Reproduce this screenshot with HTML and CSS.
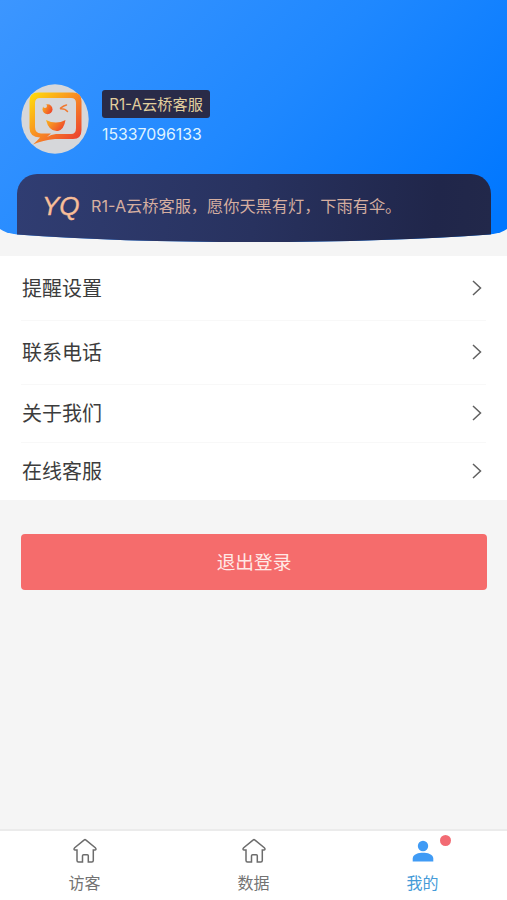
FILE: index.html
```html
<!DOCTYPE html>
<html lang="zh-CN">
<head>
<meta charset="utf-8">
<meta name="viewport" content="width=device-width, initial-scale=1">
<title>我的</title>
<link rel="stylesheet" href="styles.css">
</head>
<body>
<div class="page">
  <header class="hero">
    <div class="profile">
      <svg class="avatar" viewBox="0 0 68 70" aria-hidden="true">
        <defs>
          <linearGradient id="flame" gradientUnits="userSpaceOnUse" x1="12" y1="10" x2="58" y2="56">
            <stop offset="0" stop-color="#ffd80c"/>
            <stop offset=".5" stop-color="#f88a24"/>
            <stop offset="1" stop-color="#ea3e31"/>
          </linearGradient>
          <linearGradient id="smile" x1="0" y1="0" x2="1" y2="0.5">
            <stop offset="0" stop-color="#fcb51c"/>
            <stop offset="1" stop-color="#ef4b2b"/>
          </linearGradient>
        </defs>
        <ellipse cx="34" cy="35" rx="33.7" ry="34.7" fill="#d6d7da"/>
        <path fill="url(#flame)" fill-rule="evenodd" d="M17 8.500H52Q60.500 8.500 60.500 17V46Q60.500 55 52 55H34Q22 56 12 60.500Q16 57 19 53.500Q8.500 53 8.500 44V17Q8.500 8.500 17 8.500ZM19 14Q14 14 14 19V43Q14 49 20 49.500H30L26 53Q30 50.500 35 50H50Q55 50 55 44V19Q55 14 50 14Z"/>
        <circle cx="26.500" cy="25.200" r="5" fill="url(#smile)"/>
        <circle cx="24" cy="22" r="2" fill="#d6d7da"/>
        <path fill="url(#smile)" d="M25 36Q35 41 44.500 36Q43 45.500 37 47Q28 48 25 36Z"/>
        <path fill="none" stroke="#f07a32" stroke-width="1.500" stroke-linecap="round" d="M45.500 21Q43 21.500 39.500 24.200M39.500 24.800Q44 24.500 46.500 27.500"/>
      </svg>
      <div class="identity">
        <div class="name">R1-A云桥客服</div>
        <div class="phone">15337096133</div>
      </div>
    </div>
    <div class="banner">
      <span class="brand">YQ</span>
      <span class="greeting">R1-A云桥客服，愿你天黑有灯，下雨有伞。</span>
    </div>
  </header>

  <nav class="menu">
    <a class="row row-first"><span>提醒设置</span><svg class="chevron" viewBox="0 0 10 16"><path d="M1 1l7.500 7L1 15"/></svg></a>
    <a class="row row-second"><span>联系电话</span><svg class="chevron" viewBox="0 0 10 16"><path d="M1 1l7.500 7L1 15"/></svg></a>
    <a class="row row-third"><span>关于我们</span><svg class="chevron" viewBox="0 0 10 16"><path d="M1 1l7.500 7L1 15"/></svg></a>
    <a class="row row-last"><span>在线客服</span><svg class="chevron" viewBox="0 0 10 16"><path d="M1 1l7.500 7L1 15"/></svg></a>
  </nav>

  <button class="logout">退出登录</button>

  <footer class="tabs">
    <a class="tab">
      <svg class="tab-icon" viewBox="0 0 26 26"><path class="house" d="M12.300 1.900Q13 1.300 13.700 1.900L23.300 9.700Q24.900 11.600 23 12H21.300V22.500Q21.300 24 19.800 24H16.300V17.800Q16.300 16.800 15.300 16.800H11.700Q10.500 16.800 10.500 17.800V24H6.500Q5 24 5 22.500V12H3Q1.100 11.600 2.700 9.700Z"/></svg>
      <span>访客</span>
    </a>
    <a class="tab">
      <svg class="tab-icon" viewBox="0 0 26 26"><path class="house" d="M12.300 1.900Q13 1.300 13.700 1.900L23.300 9.700Q24.900 11.600 23 12H21.300V22.500Q21.300 24 19.800 24H16.300V17.800Q16.300 16.800 15.300 16.800H11.700Q10.500 16.800 10.500 17.800V24H6.500Q5 24 5 22.500V12H3Q1.100 11.600 2.700 9.700Z"/></svg>
      <span>数据</span>
    </a>
    <a class="tab tab-active">
      <span class="icon-wrap">
        <svg class="tab-icon" viewBox="0 0 26 26"><circle cx="13" cy="8" r="5.200"/><path d="M2.700 23.500V20.500C2.700 16 9 14.800 13 14.800S23.300 16 23.300 20.500V23.500Z"/></svg>
        <i class="dot"></i>
      </span>
      <span>我的</span>
    </a>
  </footer>
</div>
</body>
</html>
```

FILE: styles.css
```css
* { box-sizing: border-box; }

body {
  margin: 0;
  background: #f5f5f5;
  color: #3c3c3c;
  font-family: Inter, "Noto Sans CJK SC", sans-serif;
}

.page {
  display: flex;
  flex-direction: column;
  height: 900px;
}

.hero {
  flex: none;
  height: 242px;
  margin-bottom: 14px;
  padding: 84px 16px 0 17px;
  background: linear-gradient(135deg, #3c96ff 0%, #1f88ff 50%, #0077ff 95%);
  clip-path: path("M0 0H507V229Q502 233 490 234.500Q390 242 253.500 242Q117 242 17 234.500Q5 233 0 229Z");
}

.profile {
  display: flex;
  height: 90px;
  padding-left: 4px;
}

.avatar {
  width: 68px;
  height: 70px;
}

.identity { padding: 6px 0 0 13px; }

.name {
  width: 108px;
  height: 28px;
  border-radius: 3px;
  background: #292b48;
  color: #e1cf9d;
  font-size: 15.200px;
  line-height: 30px;
  text-align: center;
  white-space: nowrap;
}

.phone {
  margin-top: 7px;
  color: #dff3ff;
  font-size: 15.800px;
  line-height: 20px;
}

.banner {
  display: flex;
  align-items: center;
  height: 68px;
  padding: 0 0 5px 25px;
  border-radius: 20px 20px 0 0;
  background: linear-gradient(95deg, #303d72 0%, #28325f 50%, #20264a 88%, #22284a 100%);
  color: #d5aea0;
}

.brand {
  width: 49px;
  padding-top: 2px;
  color: #f8be98;
  font-family: "Liberation Sans", sans-serif;
  font-size: 26px;
  font-style: italic;
  -webkit-text-stroke: .3px #f8be98;
}

.greeting {
  padding-bottom: 2px;
  font-size: 16.200px;
  white-space: nowrap;
}

.menu {
  flex: none;
  padding: 0 21px;
  background: #fff;
}

.row {
  display: flex;
  align-items: center;
  justify-content: space-between;
  padding: 0 4px 0 1px;
  border-bottom: 1px solid #f8f8f8;
  font-size: 20px;
}

.row span { padding-bottom: 2px; }

.row-first { height: 65px; }
.row-second { height: 64px; padding-bottom: 1px; }
.row-third { height: 58px; padding-bottom: 1px; }
.row-last { height: 57px; padding-bottom: 1px; border-bottom: 0; }

.chevron {
  width: 10px;
  height: 16px;
  fill: none;
  stroke: #606060;
  stroke-width: 1.500;
}

.logout {
  flex: none;
  height: 56px;
  margin: 34px 20px 0 21px;
  padding: 0 0 4px;
  border: 0;
  border-radius: 4px;
  background: #f56c6c;
  color: #ffe9e6;
  font: 18.700px "Noto Sans CJK SC", sans-serif;
}

.tabs {
  display: grid;
  flex: none;
  grid-template-columns: repeat(3, 1fr);
  height: 71px;
  margin-top: auto;
  border-top: 2px solid #ebebeb;
  background: #fff;
}

.tab {
  display: flex;
  flex-direction: column;
  align-items: center;
  gap: 7px;
  padding-top: 7px;
  color: #737373;
  font-size: 16px;
  line-height: 24px;
}

.tab-icon {
  display: block;
  width: 26px;
  height: 26px;
  fill: #409bf5;
}

.house {
  fill: none;
  stroke: #6c6c6c;
  stroke-width: 1.500;
}

.tab-active { color: #459bd8; }
.icon-wrap { position: relative; }

.dot {
  position: absolute;
  top: -3px;
  right: -15px;
  width: 11px;
  height: 11px;
  border-radius: 50%;
  background: #f26b73;
}
```
